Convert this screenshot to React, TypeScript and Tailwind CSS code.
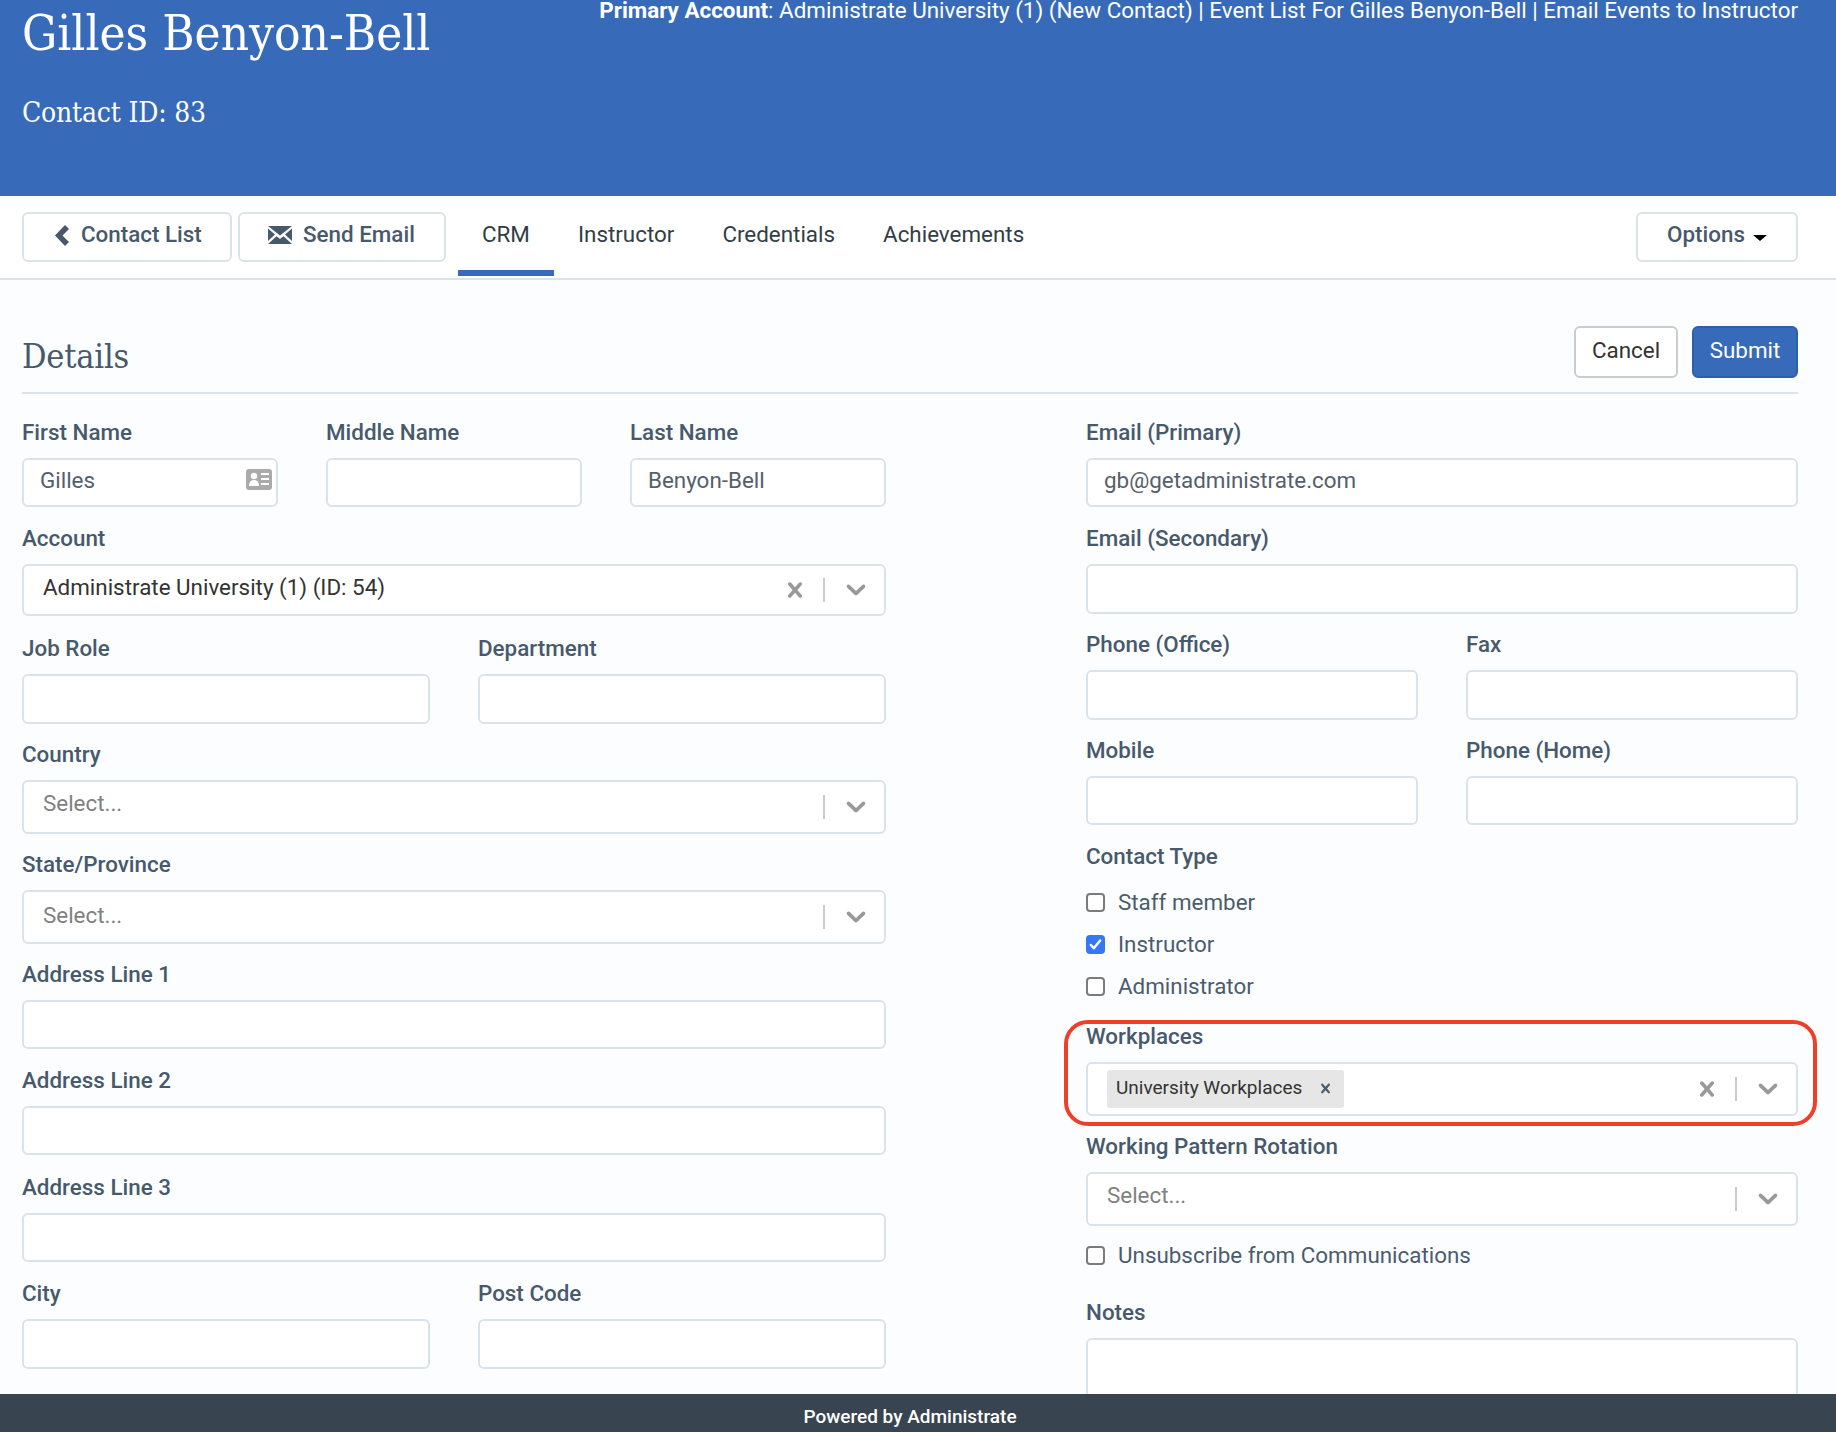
const slab = "[font-family:'DejaVu_Serif',serif] [font-stretch:condensed]"

function Label({ children }: { children: React.ReactNode }) {
  return <div className="h-[26px] mb-[13px] text-[22.4px] leading-[27px] font-medium text-[#47596b] whitespace-nowrap">{children}</div>
}

function Field({ label, value, mb = 'mb-[18px]', h = 'h-[49px]', children }: { label: string; value?: string; mb?: string; h?: string; children?: React.ReactNode }) {
  return (
    <div className={mb}>
      <Label>{label}</Label>
      <div className="relative">
        <input
          defaultValue={value}
          className={`${h} w-full block rounded-[6px] border-2 border-[#dbe3ea] bg-white pl-[16px] pb-[6px] text-[22.4px] text-[#55606b] outline-none`}
        />
        {children}
      </div>
    </div>
  )
}

function ClearIcon({ className }: { className: string }) {
  return (
    <svg viewBox="0 0 20 20" className={className} fill="currentColor">
      <path d="M14.348 14.849c-0.469 0.469-1.229 0.469-1.697 0l-2.651-3.030-2.651 3.029c-0.469 0.469-1.229 0.469-1.697 0-0.469-0.469-0.469-1.229 0-1.697l2.758-3.15-2.759-3.152c-0.469-0.469-0.469-1.228 0-1.697s1.228-0.469 1.697 0l2.652 3.031 2.651-3.031c0.469-0.469 1.228-0.469 1.697 0s0.469 1.229 0 1.697l-2.758 3.152 2.758 3.15c0.469 0.469 0.469 1.229 0 1.698z" />
    </svg>
  )
}

function Select({ label, value, placeholder, clear, mb = 'mb-[18px]', h = 'h-[53px]', textMb = 'mb-[8px]', children }: { label: string; value?: string; placeholder?: string; clear?: boolean; mb?: string; h?: string; textMb?: string; children?: React.ReactNode }) {
  return (
    <div className={mb}>
      <Label>{label}</Label>
      <div className={`${h} flex items-center rounded-[6px] border-2 border-[#dbe3ea] bg-white pl-[19px] pr-[12px]`}>
        <div className="flex-1 min-w-0 flex items-center">
          {value && <span className={`text-[22.4px] leading-[26px] text-[#333333] ${textMb}`}>{value}</span>}
          {placeholder && <span className={`text-[22.4px] leading-[26px] text-[#808080] ${textMb}`}>{placeholder}</span>}
          {children}
        </div>
        {clear && <ClearIcon className="w-[30px] h-[30px] text-[#999999] mr-[13px]" />}
        <div className="w-[2px] h-[24px] bg-[#cccccc] mr-[15px]" />
        <svg viewBox="0 0 20 20" className="w-[32px] h-[32px] mb-[2px] text-[#999999]" fill="currentColor">
          <path d="M4.516 7.548c0.436-0.446 1.043-0.481 1.576 0l3.908 3.747 3.908-3.747c0.533-0.481 1.141-0.446 1.574 0 0.436 0.445 0.408 1.197 0 1.615-0.406 0.418-4.695 4.502-4.695 4.502-0.217 0.223-0.502 0.335-0.787 0.335s-0.57-0.112-0.789-0.335c0 0-4.287-4.084-4.695-4.502s-0.436-1.17 0-1.615z" />
        </svg>
      </div>
    </div>
  )
}

function Check({ label, checked }: { label: string; checked?: boolean }) {
  return (
    <div className="h-[42px] flex items-center gap-[13px] text-[22.4px] text-[#4b5c6d]">
      {checked ? (
        <span className="w-[19px] h-[19px] -mt-[2px] rounded-[4px] bg-[#3478f6] flex items-center justify-center">
          <svg viewBox="0 0 16 16" className="w-[15px] h-[15px]" fill="none" stroke="white" strokeWidth="2.6" strokeLinecap="round" strokeLinejoin="round">
            <path d="M3 8.5l3.2 3.5L13 3.8" />
          </svg>
        </span>
      ) : (
        <span className="w-[19px] h-[19px] -mt-[2px] rounded-[4px] border-2 border-[#7b7b7b] bg-white" />
      )}
      <span>{label}</span>
    </div>
  )
}

export default function App() {
  return (
    <div className="h-[1432px] flex flex-col overflow-hidden bg-[#fbfdff] [font-family:Roboto,sans-serif]">
      <header className="h-[196px] shrink-0 bg-[#376bb9] text-white pl-[22px] pr-[38px] flex justify-between items-start">
        <div>
          <h1 className={`${slab} h-[66px] text-[49px] leading-[68px] whitespace-nowrap`}>Gilles Benyon-Bell</h1>
          <div className={`${slab} mt-[30px] text-[28px] leading-[34px] tracking-[-0.2px]`}>Contact ID: 83</div>
        </div>
        <div className="text-[22.4px] leading-[20px] whitespace-nowrap">
          <b className="font-bold">Primary Account</b>: Administrate University (1) (New Contact) | Event List For Gilles Benyon-Bell | Email Events to Instructor
        </div>
      </header>

      <nav className="h-[84px] shrink-0 bg-white border-b-2 border-[#dbe3ea] pl-[22px] pr-[38px] pt-[16px] flex items-start">
        <button className="h-[50px] w-[210px] flex items-center pl-[31px] pb-[4px] gap-[12px] rounded-[6px] border-2 border-[#dbe3ea] bg-white text-[22.4px] font-medium text-[#47596b]">
          <svg viewBox="0 0 14 21" className="w-[14px] h-[21px] mt-[1px]" fill="currentColor">
            <polygon points="10,0 14,4 7.5,10.5 14,17 10,21 0,10.5" />
          </svg>
          Contact List
        </button>
        <button className="ml-[6px] h-[50px] w-[208px] flex items-center pl-[28px] pb-[4px] gap-[11px] rounded-[6px] border-2 border-[#dbe3ea] bg-white text-[22.4px] font-medium text-[#47596b]">
          <svg viewBox="0 0 24 18" className="w-[24px] h-[18px]" fill="currentColor">
            <polygon points="0,0 24,0 12,9.5" />
            <polygon points="0,2.5 7,8.5 0,15" />
            <polygon points="24,2.5 17,8.5 24,15" />
            <polygon points="0,18 8.5,10.3 12,13 15.5,10.3 24,18" />
          </svg>
          Send Email
        </button>
        <div className="ml-[12px] flex text-[22.4px] text-[#333d47]">
          <div className="h-[64px] px-[24px] leading-[44px] border-b-[6px] border-[#376bb9]">CRM</div>
          <div className="h-[64px] px-[24px] leading-[44px]">Instructor</div>
          <div className="h-[64px] px-[24px] leading-[44px]">Credentials</div>
          <div className="h-[64px] px-[24px] leading-[44px]">Achievements</div>
        </div>
        <button className="ml-auto h-[50px] w-[162px] flex items-center justify-center pb-[4px] gap-[8px] rounded-[6px] border-2 border-[#dbe3ea] bg-white text-[22.4px] font-medium text-[#47596b]">
          Options
          <span className="w-0 h-0 mt-[6px] border-x-[7px] border-x-transparent border-t-[6px] border-t-black" />
        </button>
      </nav>

      <main className="flex-1 min-h-0 overflow-hidden pl-[22px] pr-[38px] pt-[46px]">
        <div className="h-[68px] flex justify-between items-start border-b-2 border-[#dbe3ea]">
          <h2 className={`${slab} text-[34px] leading-[60px] tracking-[-0.2px] text-[#47596b]`}>Details</h2>
          <div className="flex gap-[14px]">
            <button className="h-[52px] w-[104px] pb-[3px] rounded-[6px] border-2 border-[#cccccc] bg-white text-[22.4px] text-[#333333]">Cancel</button>
            <button className="h-[52px] w-[106px] pb-[3px] rounded-[6px] border-2 border-[#2e5fa8] bg-[#376bb9] text-[22.4px] text-white">Submit</button>
          </div>
        </div>

        <div className="pt-[25px] flex gap-[200px]">
          <div className="w-[864px] shrink-0">
            <div className="grid grid-cols-3 gap-x-[48px]">
              <Field label="First Name" value="Gilles">
                <svg viewBox="0 0 26 21" className="absolute right-[6px] top-[11px] w-[26px] h-[21px]">
                  <rect width="26" height="21" rx="3" fill="#aaaaaa" />
                  <circle cx="8" cy="7" r="3.2" fill="white" />
                  <path d="M3 17c0-4 2-6 5-6s5 2 5 6z" fill="white" />
                  <path d="M15 5h8M15 10h8M15 15h8" stroke="white" strokeWidth="2" />
                </svg>
              </Field>
              <Field label="Middle Name" />
              <Field label="Last Name" value="Benyon-Bell" />
            </div>
            <Select label="Account" value="Administrate University (1) (ID: 54)" clear h="h-[52px]" mb="mb-[19px]" textMb="mb-[6px]" />
            <div className="grid grid-cols-2 gap-x-[48px]">
              <Field label="Job Role" h="h-[50px]" mb="mb-[17px]" />
              <Field label="Department" h="h-[50px]" mb="mb-[17px]" />
            </div>
            <Select label="Country" placeholder="Select..." h="h-[54px]" mb="mb-[17px]" />
            <Select label="State/Province" placeholder="Select..." h="h-[54px]" mb="mb-[17px]" textMb="mb-[5px]" />
            <Field label="Address Line 1" />
            <Field label="Address Line 2" mb="mb-[19px]" />
            <Field label="Address Line 3" />
            <div className="grid grid-cols-2 gap-x-[48px]">
              <Field label="City" h="h-[50px]" />
              <Field label="Post Code" h="h-[50px]" />
            </div>
          </div>

          <div className="w-[712px] shrink-0">
            <Field label="Email (Primary)" value="gb@getadministrate.com" h="h-[49px]" />
            <Field label="Email (Secondary)" h="h-[50px]" mb="mb-[17px]" />
            <div className="grid grid-cols-2 gap-x-[48px]">
              <Field label="Phone (Office)" h="h-[50px]" mb="mb-[17px]" />
              <Field label="Fax" h="h-[50px]" mb="mb-[17px]" />
              <Field label="Mobile" mb="mb-[18px]" />
              <Field label="Phone (Home)" mb="mb-[18px]" />
            </div>
            <Label>Contact Type</Label>
            <div className="mb-[15px]">
              <Check label="Staff member" />
              <Check label="Instructor" checked />
              <Check label="Administrator" />
            </div>
            <div className="relative mb-[17px]">
              {/* red annotation round the field */}
              <div className="absolute -left-[22px] -right-[19px] -top-[3px] -bottom-[10px] rounded-[24px] border-[4px] border-[#ee4028] pointer-events-none" />
              <Select label="Workplaces" clear h="h-[54px]" mb="mb-0">
                <div className="h-[38px] pl-[9px] pr-[9px] pb-[2px] flex items-center gap-[14px] bg-[#e6e6e6] rounded-[3px] text-[#333333] text-[19px]">
                  University Workplaces
                  <ClearIcon className="w-[19px] h-[19px] text-[#4b5c6d]" />
                </div>
              </Select>
            </div>
            <Select label="Working Pattern Rotation" placeholder="Select..." h="h-[54px]" mb="mb-[9px]" />
            <Check label="Unsubscribe from Communications" />
            <div className="mt-[22px]">
              <Label>Notes</Label>
              <textarea className="w-full h-[200px] block rounded-[6px] border-2 border-[#dbe3ea] bg-white outline-none" />
            </div>
          </div>
        </div>
      </main>

      <footer className="h-[38px] shrink-0 bg-[#38444f] text-white text-[19px] font-medium leading-[46px] text-center pr-[16px]">Powered by Administrate</footer>
    </div>
  )
}
